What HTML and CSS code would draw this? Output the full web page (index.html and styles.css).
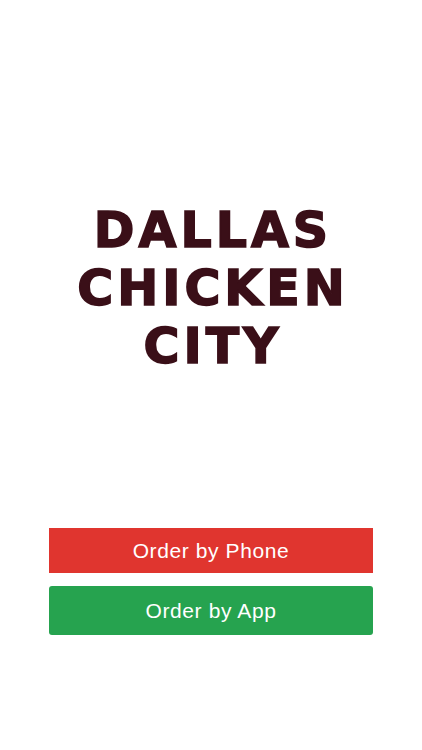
FILE: index.html
```html
<!DOCTYPE html>
<html lang="en">

<head>
  <meta charset="UTF-8">
  <title>Dallas Chicken City</title>
  <link rel="stylesheet" href="styles.css">
</head>

<body>
  <div class="screen">
    <h1 class="brand">
      <span>DALLAS</span>
      <span>CHICKEN</span>
      <span>CITY</span>
    </h1>
    <div class="actions">
      <a class="btn btn-phone" href="#">Order by Phone</a>
      <a class="btn btn-app" href="#">Order by App</a>
    </div>
  </div>
</body>

</html>
```

FILE: styles.css
```css
body {
  margin: 0;
  background: #fff;
}

.screen {
  width: 422px;
  height: 750px;
  display: flex;
  flex-direction: column;
  align-items: center;
}

.brand {
  margin: 202px 0 0;
  display: flex;
  flex-direction: column;
  align-items: center;
  font-family: "DejaVu Sans", sans-serif;
  font-weight: bold;
  font-size: 49px;
  line-height: 58px;
  letter-spacing: 4px;
  color: #3a0f18;
  -webkit-text-stroke: 1.6px #3a0f18;
}

.brand span {
  margin-right: -4px;
}

.actions {
  margin-top: 152px;
  width: 324px;
  display: flex;
  flex-direction: column;
  gap: 13px;
}

.btn {
  display: flex;
  align-items: center;
  justify-content: center;
  color: #fff;
  text-decoration: none;
  font-family: "Liberation Sans", Arial, sans-serif;
  font-size: 21px;
  letter-spacing: 0.6px;
}

.btn-phone {
  height: 45px;
  background: #e0352f;
}

.btn-app {
  height: 49px;
  background: #26a34f;
  border-radius: 3px;
}
```
